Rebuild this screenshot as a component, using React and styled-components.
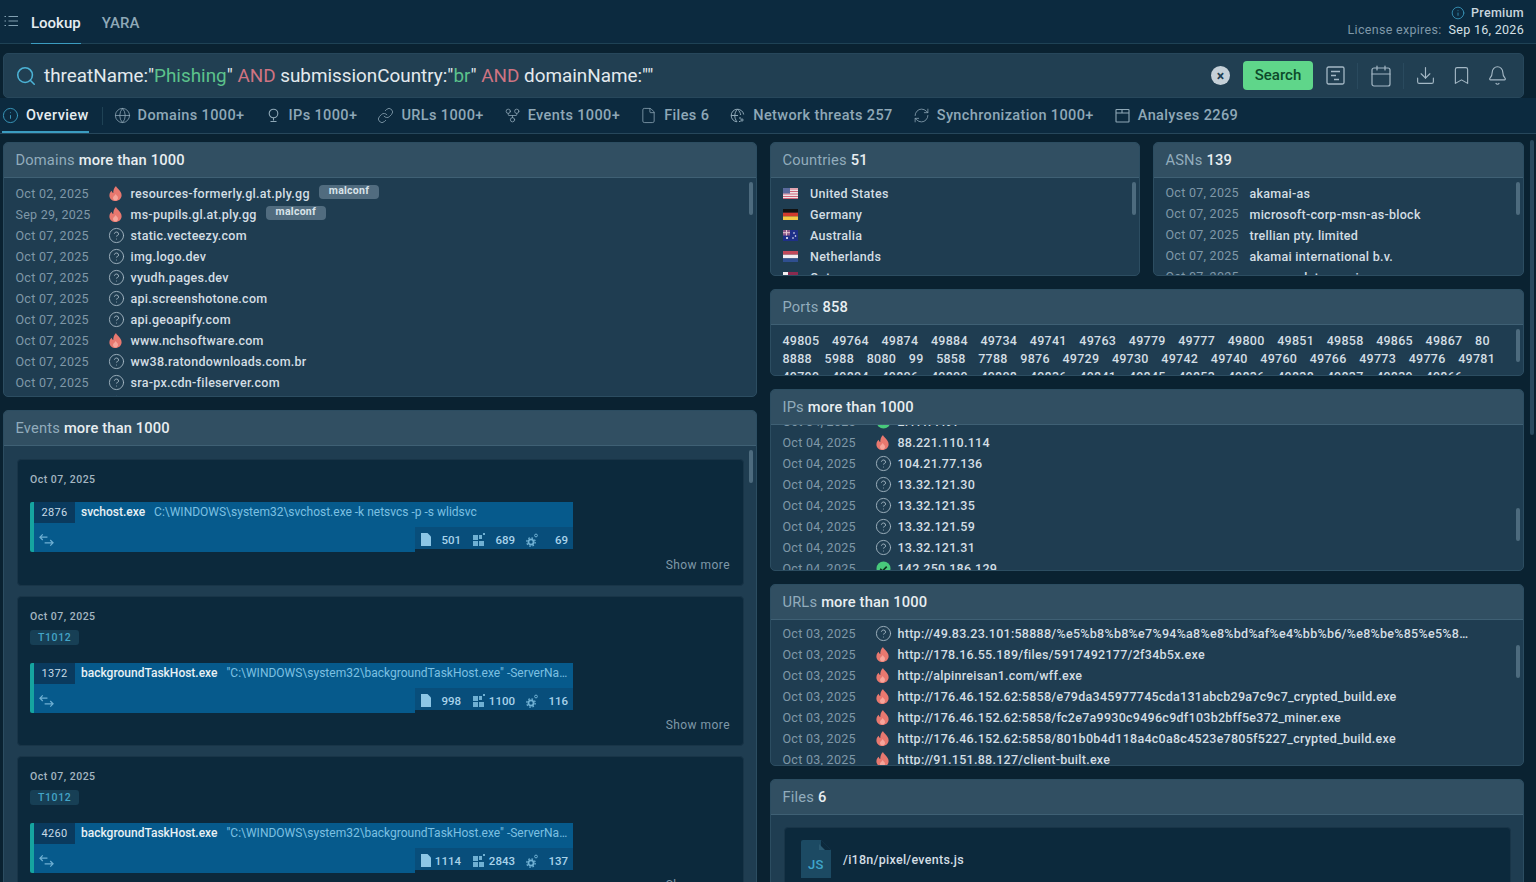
import React from 'react';
import styled, { createGlobalStyle } from 'styled-components';
import { Search, Info, Globe, Link, GitFork, File, Calendar, Download, Bookmark, Bell, RefreshCw, CircleHelp } from 'lucide-react';

const GlobalStyle = createGlobalStyle`
  html, body { margin: 0; height: 100%; overflow: hidden; background: #0a2231; }
  body { font-family: Roboto, "Liberation Sans", sans-serif; color: #dbe4ea; }
  #root { height: 882px; overflow: hidden; }
  * { box-sizing: border-box; }
`;

const Page = styled.div`
  position: relative;
  height: 882px;
  padding-right: 12px;
  overflow: hidden;
  background: #0a2231;
`;

const Header = styled.header`
  display: flex;
  align-items: stretch;
  justify-content: space-between;
  height: 44px;
  margin-right: -12px;
  padding: 0 12px 0 4px;
  background: #0c2a3f;
  border-bottom: 1px solid #1f4255;
`;

const HeaderLeft = styled.div`
  display: flex;
  align-items: stretch;
  gap: 21px;
`;

const MenuButton = styled.div`
  display: flex;
  align-items: center;
  width: 15px;
  margin-right: -9px;
  margin-bottom: 2px;
  color: #82a0b2;
`;

const HeaderTab = styled.div`
  display: flex;
  align-items: center;
  height: 44px;
  padding-top: 2px;
  font-size: 15px;
  font-weight: 500;
  color: ${p => (p.$active ? '#e6edf1' : '#8fa8b7')};
  border-bottom: 1px solid ${p => (p.$active ? '#3b9cc0' : 'transparent')};
`;

const License = styled.div`
  display: flex;
  flex-direction: column;
  align-items: flex-end;
  justify-content: center;
  gap: 2px;
  padding-bottom: 1px;
  font-size: 12.5px;
  letter-spacing: 0.3px;
`;

const Plan = styled.div`
  display: flex;
  align-items: center;
  gap: 6px;
  font-weight: 500;
  color: #c9d6de;
  svg { color: #3c9cc0; }
`;

const Expires = styled.div`
  display: flex;
  gap: 7px;
  color: #7f98a8;
  b { font-weight: 400; color: #d5e0e6; }
`;

const SearchBar = styled.div`
  display: flex;
  align-items: center;
  height: 45px;
  margin: 9px 0 0 3px;
  padding: 0 4px 0 11px;
  background: #213f52;
  border: 1px solid #27475b;
  border-radius: 5px;
`;

const SearchIcon = styled(Search)`
  flex: none;
  color: #4cb3d6;
  margin-right: 7px;
`;

const Query = styled.div`
  flex: 1;
  font-size: 18.87px;
  color: #e3eaee;
  white-space: nowrap;
`;

const Str = styled.span`
  color: #5cc28c;
`;

const Op = styled.span`
  color: #cf7482;
`;

const ClearButton = styled.span`
  display: flex;
  align-items: center;
  justify-content: center;
  width: 19px;
  height: 19px;
  margin-right: 13px;
  border-radius: 50%;
  background: #c5d0d8;
  color: #213f52;
  font-size: 14px;
  font-weight: 700;
  line-height: 1;
`;

const SearchButton = styled.button`
  width: 70px;
  height: 29px;
  margin-right: 11.5px;
  padding: 0 0 2px;
  border: 0;
  border-radius: 4px;
  background: #5fd68a;
  color: #0d4a2b;
  font: 500 15px Roboto, sans-serif;
`;

const ToolIcon = styled.span`
  flex: none;
  display: flex;
  align-items: center;
  justify-content: center;
  width: ${p => p.$w}px;
  height: 28px;
  color: #a4b8c5;
`;

const ToolDivider = styled.span`
  flex: none;
  width: 1px;
  height: 26px;
  margin-left: ${p => p.$ml || 0}px;
  background: #2a4a5e;
`;

const TabBar = styled.nav`
  display: flex;
  align-items: stretch;
  height: 36px;
  margin-right: -12px;
  background: #0c2a3f;
  border-bottom: 1px solid #27475b;
`;

const Tab = styled.div`
  display: flex;
  align-items: center;
  gap: 7px;
  margin-left: ${p => p.$gap ?? 20}px;
  padding-top: ${p => (p.$active ? 2 : 0)}px;
  font-size: 14.5px;
  font-weight: 500;
  letter-spacing: 0.38px;
  white-space: nowrap;
  color: ${p => (p.$active ? '#e6edf1' : '#8fa8b7')};
  border-bottom: ${p => (p.$active ? '2px solid #3b9cc0' : '0')};
  svg { color: ${p => (p.$active ? '#3b9cc0' : '#8fa8b7')}; flex: none; }
`;

const TabDivider = styled.span`
  width: 1px;
  height: 18px;
  margin-left: 13px;
  align-self: center;
  background: #1f4255;
`;

const Content = styled.main`
  display: grid;
  grid-template-columns: 754px 754px;
  column-gap: 13px;
  padding: 8px 0 0 3px;
`;

const Column = styled.div`
  display: flex;
  flex-direction: column;
  gap: 13px;
  min-width: 0;
`;

const Pair = styled.div`
  display: grid;
  grid-template-columns: 370px 371px;
  gap: 13px;
`;

const Card = styled.section`
  position: relative;
  display: flex;
  flex-direction: column;
  height: ${p => p.$h}px;
  overflow: hidden;
  background: #1f3d51;
  border: 1px solid #2c4d61;
  border-radius: 5px;
`;

const CardHead = styled.h2`
  flex: none;
  height: 35px;
  margin: 0;
  padding: 0 11.5px;
  display: flex;
  align-items: center;
  gap: 4px;
  background: #314f62;
  border-bottom: 1px solid #3f6074;
  font-size: 14.7px;
  font-weight: 500;
  letter-spacing: 0.15px;
  color: #e8eef1;
  span { color: #92acbc; font-weight: 400; }
`;

const CardBody = styled.div`
  flex: 1;
  min-height: 0;
  overflow: hidden;
  padding: ${p => p.$pad || '5px 11.5px 0'};
`;

const Row = styled.div`
  display: flex;
  align-items: center;
  height: 21px;
  white-space: nowrap;
  font-size: 12.5px;
  font-weight: 500;
  letter-spacing: 0.27px;
  color: #d3dee4;
`;

const RowDate = styled.span`
  flex: none;
  width: ${p => p.$w || 93}px;
  margin-bottom: ${p => (p.$raised ? 3 : 0)}px;
  color: #7f98a8;
  font-weight: 400;
`;

const RowIcon = styled.span`
  flex: none;
  display: flex;
  align-items: center;
  width: 22px;
  color: #a3b6c2;
`;

const HelpIcon = styled(CircleHelp)`
  flex: none;
  margin-left: -1px;
`;

const Tag = styled.span`
  margin: -3px 0 0 9px;
  padding: 0 10px;
  height: 14px;
  line-height: 12px;
  border-radius: 4px;
  background: #516c7f;
  color: #d9e3e9;
  font-size: 10.5px;
  font-weight: 700;
`;

const FlagBox = styled.span`
  flex: none;
  display: flex;
  width: 27.5px;
`;

const Scrollbar = styled.div`
  position: absolute;
  top: ${p => p.$top ?? 39}px;
  right: ${p => p.$right ?? 3}px;
  width: 4px;
  height: ${p => p.$h ?? 33}px;
  border-radius: 2px;
  background: ${p => p.$color || '#4d6b7e'};
`;

const Ports = styled.div`
  display: flex;
  flex-wrap: wrap;
  gap: 0 12.6px;
  width: 725px;
  font-size: 12.5px;
  font-weight: 500;
  line-height: 18px;
  letter-spacing: 0.27px;
  color: #d3dee4;
`;

const ClippedList = styled.div`
  margin-top: ${p => p.$offset || 0}px;
`;

const EventCard = styled.article`
  position: relative;
  height: ${p => p.$h}px;
  margin-bottom: 10px;
  padding: 13px 12px 0 12px;
  background: #0c293c;
  border: 1px solid #193548;
  border-radius: 4px;
`;

const EventDate = styled.div`
  font-size: 10.5px;
  font-weight: 500;
  letter-spacing: 0.5px;
  line-height: 14px;
  color: #a4b6c1;
`;

const Technique = styled.span`
  display: inline-block;
  margin-top: 6px;
  padding: 0 8px;
  height: 15px;
  line-height: 15px;
  border-radius: 3px;
  background: #173f55;
  color: #43a6c8;
  font-size: 10.5px;
  font-weight: 500;
  letter-spacing: 0.6px;
`;

const Process = styled.div`
  width: 543px;
  margin-top: ${p => p.$top}px;
  border-left: 4px solid #16a4a0;
  border-radius: 2px 0 0 2px;
  background: linear-gradient(#065a8c 0 0) left top / 100% 25px no-repeat,
    linear-gradient(#065a8c 0 0) left top / 381px 100% no-repeat;
`;

const ProcessTop = styled.div`
  display: flex;
  align-items: flex-start;
  height: 25px;
  padding-right: 6px;
  font-size: 12px;
  line-height: 21px;
  white-space: nowrap;
`;

const Pid = styled.span`
  flex: none;
  width: 41px;
  height: 21px;
  text-align: center;
  background: #0a3a5e;
  color: #c9dbe6;
  font-size: 11px;
  letter-spacing: 0.3px;
`;

const ProcessName = styled.b`
  flex: none;
  margin-left: 6px;
  font-weight: 500;
  color: #e8f1f5;
`;

const Command = styled.span`
  min-width: 0;
  margin-left: 9px;
  color: #7cc0e2;
`;

const ProcessBottom = styled.div`
  display: flex;
  align-items: flex-start;
  justify-content: space-between;
  height: 25px;
`;

const Arrows = styled.span`
  display: flex;
  margin: 6px 0 0 5px;
  color: #6fb0d3;
`;

const Counters = styled.div`
  display: flex;
  align-items: center;
  width: 158px;
  height: 22px;
  padding: 3px 5px 0 6px;
  background: #084e7b;
  color: #a9d3ea;
  font-size: 11.5px;
  font-weight: 500;
  svg { flex: none; }
`;

const Counter = styled.span`
  display: flex;
  justify-content: flex-end;
  align-items: center;
  width: ${p => p.$w}px;
  color: ${p => (p.$icon ? '#6fb0d3' : 'inherit')};
`;

const DocIcon = styled.span`
  display: flex;
  color: #8cc6e6;
`;

const ShowMore = styled.span`
  position: absolute;
  right: 13px;
  bottom: 13px;
  font-size: 12px;
  letter-spacing: 0.45px;
  color: #7f98a8;
`;

const FileCard = styled.div`
  display: flex;
  align-items: center;
  gap: 12px;
  height: 64px;
  margin: 12px 12px 0 13px;
  padding: 0 16px;
  background: #0c293c;
  border: 1px solid #193548;
  border-radius: 4px;
  font-size: 12.5px;
  font-weight: 500;
  letter-spacing: 0.27px;
  color: #d3dee4;
`;

const Flame = () => (
  <svg width="13" height="15" viewBox="0 0 13 15">
    <path fill="#e8786f" d="M7 0c.6 2.400 5.600 4.600 5.600 9.200C12.600 12.600 9.800 15 6.500 15S.4 12.600.4 9.400c0-2.200 1.300-3.700 2.300-4.600.2 1.300.8 2 1.600 2.300C4.100 4.600 5 1.800 7 0z" />
    <path fill="#f6a59b" d="M6.700 8c.3 1.200 2.300 1.900 2.300 3.900 0 1.500-1.100 2.500-2.500 2.500S4 13.400 4 11.900c0-1.600 2-2.300 2.700-3.900z" />
  </svg>
);

const Good = () => (
  <svg width="15" height="15" viewBox="0 0 15 15">
    <circle cx="7.500" cy="7.500" r="7" fill="#48c97b" />
    <path d="M4.200 7.700l2.300 2.300 4.200-4.400" fill="none" stroke="#10301f" strokeWidth="1.600" />
  </svg>
);

const status = {
  bad: <Flame />,
  unknown: <HelpIcon size={17} strokeWidth={1.3} />,
  good: <Good />,
};

const MenuIcon = () => (
  <svg width="14" height="14" viewBox="0 0 14 14" fill="none" stroke="currentColor" strokeWidth="1.100">
    <path d="M4.500 2.500H14M4.500 7H14M4.500 11.500H14" />
    <path d="M.5 2.500h1.500M.5 7h1.500M.5 11.500h1.500" />
  </svg>
);

const BulbPin = () => (
  <svg width="17" height="17" viewBox="-1 -1 17 17" fill="none" stroke="currentColor" strokeWidth="1.100">
    <circle cx="7.500" cy="5.500" r="4.300" />
    <path d="M7.500 9.800v2.700M4.500 13.500h6" />
  </svg>
);

const NetworkGlobe = () => (
  <svg width="17" height="17" viewBox="-1 -1 17 17" fill="none" stroke="currentColor" strokeWidth="1">
    <path d="M13.700 6.500A6.300 6.300 0 1 0 7 13.800M1 7.500h7M7.500 1.200C4 5 4 10 7 13.800M7.500 1.200c2 2 3 3.800 3.200 5.800" />
    <circle cx="12" cy="12" r="1.100" /><path d="M9 10h2M9 13.500h1.500" />
  </svg>
);

const PanelIcon = () => (
  <svg width="17" height="17" viewBox="-1 -1 17 17" fill="none" stroke="currentColor" strokeWidth="1.100">
    <rect x="1" y="1.500" width="13" height="12.500" rx=".5" />
    <path d="M1 5h13M7 1.500V5" />
  </svg>
);

const ReportIcon = () => (
  <svg width="19" height="19" viewBox="0 0 19 19" fill="none" stroke="currentColor" strokeWidth="1.300">
    <rect x="1" y="1" width="17" height="17" rx="1.500" />
    <path d="M5 5.500h9M5 9.500h5M8 13.500h5" />
  </svg>
);

const SwapArrows = () => (
  <svg width="15" height="14" viewBox="0 0 16 14" fill="none" stroke="currentColor" strokeWidth="1.300">
    <path d="M1 4h8M4 1L1 4l3 3M6 10h9M12 7l3 3-3 3" />
  </svg>
);

const DocFill = () => (
  <svg width="10" height="13" viewBox="0 0 10 13"><path fill="currentColor" d="M0 0h6.500L10 3.500V13H0z" /></svg>
);

const TreeFill = () => (
  <svg width="12" height="13" viewBox="0 0 12 13" fill="currentColor">
    <rect x="0" y="8" width="5" height="5" /><rect x="6" y="8" width="5" height="5" />
    <rect x="0" y="2" width="5" height="5" /><rect x="6" y="2" width="3" height="4" /><rect x="10" y="0" width="2" height="2" />
  </svg>
);

const GearFill = () => (
  <svg width="12" height="14" viewBox="0 0 12 14" fill="none" stroke="currentColor">
    <circle cx="5" cy="9" r="2.600" strokeWidth="1.800" />
    <circle cx="5" cy="9" r="4.200" strokeWidth="1.300" strokeDasharray="1.600 1.700" />
    <circle cx="10" cy="2.500" r="1.400" strokeWidth="1" />
  </svg>
);

const JsFile = () => (
  <svg width="30" height="38" viewBox="0 0 30 38">
    <path fill="#1c4a63" d="M0 2a2 2 0 0 1 2-2h18l10 10v28H0z" />
    <path fill="#0c293c" d="M20 0l10 10H20z" />
    <path fill="#2b5a72" d="M18 4l6 6h-6z" />
    <text x="7" y="29" fill="#3fa6cc" fontFamily="Roboto, sans-serif" fontSize="13">JS</text>
  </svg>
);

const flags = {
  us: (
    <svg width="15" height="11" viewBox="0 0 15 11">
      <rect width="15" height="11" fill="#f0e4e6" />
      <path d="M0 1h15M0 3.500h15M0 6h15M0 8.500h15M0 10.500h15" stroke="#d0647a" strokeWidth="1.100" />
      <rect width="7" height="5.500" fill="#5b6a9c" />
    </svg>
  ),
  de: (
    <svg width="15" height="11" viewBox="0 0 15 11">
      <rect width="15" height="3.700" fill="#111" />
      <rect y="3.700" width="15" height="3.700" fill="#d23a2d" />
      <rect y="7.400" width="15" height="3.600" fill="#f5c945" />
    </svg>
  ),
  au: (
    <svg width="15" height="11" viewBox="0 0 15 11">
      <rect width="15" height="11" fill="#1e2f88" />
      <rect width="7" height="5.500" fill="#8d5a8a" />
      <path d="M0 2.700h7M3.500 0v5.500" stroke="#e9c9d2" strokeWidth="1" />
      <circle cx="11" cy="3" r=".8" fill="#fff" /><circle cx="12.500" cy="6" r=".8" fill="#fff" />
      <circle cx="10" cy="8" r=".8" fill="#fff" /><circle cx="4" cy="8" r="1" fill="#fff" />
    </svg>
  ),
  nl: (
    <svg width="15" height="11" viewBox="0 0 15 11">
      <rect width="15" height="3.700" fill="#c0495a" />
      <rect y="3.700" width="15" height="3.700" fill="#f2eef0" />
      <rect y="7.400" width="15" height="3.600" fill="#2f4f90" />
    </svg>
  ),
  qa: (
    <svg width="15" height="11" viewBox="0 0 15 11">
      <rect width="15" height="11" fill="#8a2a4f" />
      <rect width="5" height="11" fill="#f2eef0" />
    </svg>
  ),
};

const domains = [
  ['Oct 02, 2025', 'bad', 'resources-formerly.gl.at.ply.gg', 'malconf'],
  ['Sep 29, 2025', 'bad', 'ms-pupils.gl.at.ply.gg', 'malconf'],
  ['Oct 07, 2025', 'unknown', 'static.vecteezy.com'],
  ['Oct 07, 2025', 'unknown', 'img.logo.dev'],
  ['Oct 07, 2025', 'unknown', 'vyudh.pages.dev'],
  ['Oct 07, 2025', 'unknown', 'api.screenshotone.com'],
  ['Oct 07, 2025', 'unknown', 'api.geoapify.com'],
  ['Oct 07, 2025', 'bad', 'www.nchsoftware.com'],
  ['Oct 07, 2025', 'unknown', 'ww38.ratondownloads.com.br'],
  ['Oct 07, 2025', 'unknown', 'sra-px.cdn-fileserver.com'],
  ['Oct 07, 2025', 'unknown', 'cdn.jsdelivr.net'],
];

const countries = [
  ['us', 'United States'],
  ['de', 'Germany'],
  ['au', 'Australia'],
  ['nl', 'Netherlands'],
  ['qa', 'Qatar'],
];

const asns = [
  'akamai-as',
  'microsoft-corp-msn-as-block',
  'trellian pty. limited',
  'akamai international b.v.',
  'amazon-data-services',
];

const ports = [
  49805, 49764, 49874, 49884, 49734, 49741, 49763, 49779, 49777, 49800, 49851, 49858, 49865, 49867, 80,
  8888, 5988, 8080, 99, 5858, 7788, 9876, 49729, 49730, 49742, 49740, 49760, 49766, 49773, 49776, 49781,
  49799, 49804, 49806, 49809, 49808, 49836, 49841, 49845, 49853, 49836, 49838, 49837, 49839, 49866,
];

const ips = [
  ['Oct 04, 2025', 'good', '2.17.77.97'],
  ['Oct 04, 2025', 'bad', '88.221.110.114'],
  ['Oct 04, 2025', 'unknown', '104.21.77.136'],
  ['Oct 04, 2025', 'unknown', '13.32.121.30'],
  ['Oct 04, 2025', 'unknown', '13.32.121.35'],
  ['Oct 04, 2025', 'unknown', '13.32.121.59'],
  ['Oct 04, 2025', 'unknown', '13.32.121.31'],
  ['Oct 04, 2025', 'good', '142.250.186.129'],
];

const urls = [
  ['unknown', 'http://49.83.23.101:58888/%e5%b8%b8%e7%94%a8%e8%bd%af%e4%bb%b6/%e8%be%85%e5%8…'],
  ['bad', 'http://178.16.55.189/files/5917492177/2f34b5x.exe'],
  ['bad', 'http://alpinreisan1.com/wff.exe'],
  ['bad', 'http://176.46.152.62:5858/e79da345977745cda131abcb29a7c9c7_crypted_build.exe'],
  ['bad', 'http://176.46.152.62:5858/fc2e7a9930c9496c9df103b2bff5e372_miner.exe'],
  ['bad', 'http://176.46.152.62:5858/801b0b4d118a4c0a8c4523e7805f5227_crypted_build.exe'],
  ['bad', 'http://91.151.88.127/client-built.exe'],
];

const events = [
  {
    h: 127, top: 15, pid: 2876, name: 'svchost.exe',
    cmd: 'C:\\WINDOWS\\system32\\svchost.exe -k netsvcs -p -s wlidsvc',
    counts: [501, 689, 69],
  },
  {
    h: 150, technique: 'T1012', top: 18, pid: 1372, name: 'backgroundTaskHost.exe',
    cmd: '"C:\\WINDOWS\\system32\\backgroundTaskHost.exe" -ServerNa…',
    counts: [998, 1100, 116],
  },
  {
    h: 150, technique: 'T1012', top: 18, pid: 4260, name: 'backgroundTaskHost.exe',
    cmd: '"C:\\WINDOWS\\system32\\backgroundTaskHost.exe" -ServerNa…',
    counts: [1114, 2843, 137],
  },
];

const tabs = [
  [<Globe size={17} strokeWidth={1.1} />, 'Domains 1000+', 11],
  [<BulbPin />, 'IPs 1000+'],
  [<Link size={17} strokeWidth={1.1} />, 'URLs 1000+'],
  [<GitFork size={17} strokeWidth={1.1} />, 'Events 1000+'],
  [<File size={17} strokeWidth={1.1} />, 'Files 6'],
  [<NetworkGlobe />, 'Network threats 257'],
  [<RefreshCw size={17} strokeWidth={1.1} />, 'Synchronization 1000+'],
  [<PanelIcon />, 'Analyses 2269'],
];

export default function App() {
  return (
    <Page>
      <GlobalStyle />
      <Header>
        <HeaderLeft>
          <MenuButton><MenuIcon /></MenuButton>
          <HeaderTab $active>Lookup</HeaderTab>
          <HeaderTab>YARA</HeaderTab>
        </HeaderLeft>
        <License>
          <Plan><Info size={14} strokeWidth={1.4} />Premium</Plan>
          <Expires>License expires: <b>Sep 16, 2026</b></Expires>
        </License>
      </Header>

      <SearchBar>
        <SearchIcon size={22} strokeWidth={1.7} />
        <Query>
          threatName:"<Str>Phishing</Str>" <Op>AND</Op> submissionCountry:"<Str>br</Str>" <Op>AND</Op> domainName:""
        </Query>
        <ClearButton>×</ClearButton>
        <SearchButton>Search</SearchButton>
        <ToolIcon $w={22}><ReportIcon /></ToolIcon>
        <ToolDivider $ml={10.5} />
        <ToolIcon $w={45}><Calendar size={24} strokeWidth={1.2} /></ToolIcon>
        <ToolDivider />
        <ToolIcon $w={43}><Download size={21} strokeWidth={1.3} /></ToolIcon>
        <ToolIcon $w={28}><Bookmark size={21} strokeWidth={1.3} /></ToolIcon>
        <ToolIcon $w={44}><Bell size={21} strokeWidth={1.3} /></ToolIcon>
      </SearchBar>

      <TabBar>
        <Tab $active $gap={2}><Info size={17} strokeWidth={1.3} />Overview</Tab>
        <TabDivider />
        {tabs.map(([icon, label, gap]) => (
          <Tab key={label} $gap={gap}>{icon}{label}</Tab>
        ))}
      </TabBar>

      <Content>
        <Column>
          <Card $h={255}>
            <CardHead><span>Domains</span> more than 1000</CardHead>
            <CardBody>
              {domains.map(([date, st, name, tag]) => (
                <Row key={name}>
                  <RowDate>{date}</RowDate>
                  <RowIcon>{status[st]}</RowIcon>
                  {name}
                  {tag && <Tag>{tag}</Tag>}
                </Row>
              ))}
            </CardBody>
            <Scrollbar />
          </Card>
          <Card $h={481}>
            <CardHead><span>Events</span> more than 1000</CardHead>
            <CardBody $pad="13px 12px 0 13px">
              {events.map(ev => (
                <EventCard key={ev.pid} $h={ev.h}>
                  <EventDate>Oct 07, 2025</EventDate>
                  {ev.technique && <Technique>{ev.technique}</Technique>}
                  <Process $top={ev.top}>
                    <ProcessTop>
                      <Pid>{ev.pid}</Pid>
                      <ProcessName>{ev.name}</ProcessName>
                      <Command>{ev.cmd}</Command>
                    </ProcessTop>
                    <ProcessBottom>
                      <Arrows><SwapArrows /></Arrows>
                      <Counters>
                        <DocIcon><DocFill /></DocIcon>
                        <Counter $w={30}>{ev.counts[0]}</Counter>
                        <Counter $w={24} $icon><TreeFill /></Counter>
                        <Counter $w={30}>{ev.counts[1]}</Counter>
                        <Counter $w={23} $icon><GearFill /></Counter>
                        <Counter $w={30}>{ev.counts[2]}</Counter>
                      </Counters>
                    </ProcessBottom>
                  </Process>
                  <ShowMore>Show more</ShowMore>
                </EventCard>
              ))}
            </CardBody>
            <Scrollbar />
          </Card>
        </Column>

        <Column>
          <Pair>
            <Card $h={134}>
              <CardHead><span>Countries</span> 51</CardHead>
              <CardBody>
                {countries.map(([code, name]) => (
                  <Row key={code}><FlagBox>{flags[code]}</FlagBox>{name}</Row>
                ))}
              </CardBody>
              <Scrollbar />
            </Card>
            <Card $h={134}>
              <CardHead><span>ASNs</span> 139</CardHead>
              <CardBody>
                {asns.map(name => (
                  <Row key={name}><RowDate $w={84} $raised>Oct 07, 2025</RowDate>{name}</Row>
                ))}
              </CardBody>
              <Scrollbar />
            </Card>
          </Pair>
          <Card $h={87}>
            <CardHead><span>Ports</span> 858</CardHead>
            <CardBody $pad="7px 11.5px 0">
              <Ports>
                {ports.map((port, i) => <span key={i}>{port}</span>)}
              </Ports>
            </CardBody>
            <Scrollbar />
          </Card>
          <Card $h={182}>
            <CardHead><span>IPs</span> more than 1000</CardHead>
            <CardBody $pad="0 11.5px">
              <ClippedList $offset={-14}>
                {ips.map(([date, st, ip], i) => (
                  <Row key={i}>
                    <RowDate>{date}</RowDate>
                    <RowIcon>{status[st]}</RowIcon>
                    {ip}
                  </Row>
                ))}
              </ClippedList>
            </CardBody>
            <Scrollbar $top={118} />
          </Card>
          <Card $h={182}>
            <CardHead><span>URLs</span> more than 1000</CardHead>
            <CardBody $pad="3px 11.5px 0">
              {urls.map(([st, url]) => (
                <Row key={url}>
                  <RowDate>Oct 03, 2025</RowDate>
                  <RowIcon>{status[st]}</RowIcon>
                  {url}
                </Row>
              ))}
            </CardBody>
            <Scrollbar $top={60} />
          </Card>
          <Card $h={200}>
            <CardHead><span>Files</span> 6</CardHead>
            <FileCard>
              <JsFile />
              /i18n/pixel/events.js
            </FileCard>
          </Card>
        </Column>
      </Content>
      <Scrollbar $top={140} $right={2} $h={295} $color="#2a4a5e" />
    </Page>
  );
}
